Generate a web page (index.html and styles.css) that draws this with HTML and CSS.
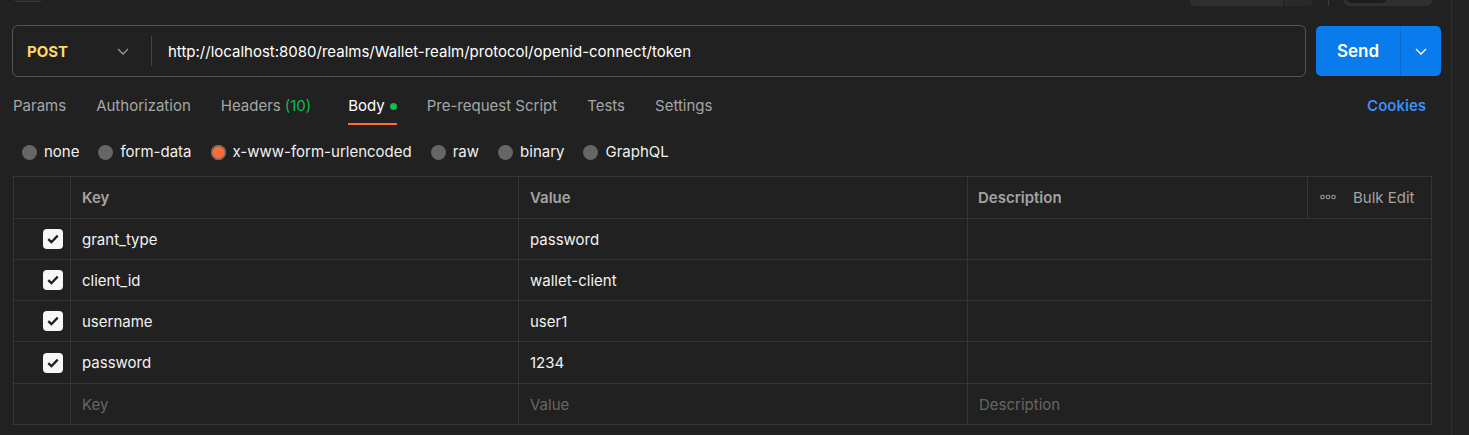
FILE: index.html
```html
<!DOCTYPE html>
<html lang="en">
<head>
<meta charset="utf-8">
<title>POST token request</title>
<link rel="stylesheet" href="styles.css">
</head>
<body>
<div class="page">
  <main class="main">
    <div class="toolbar">
      <div class="tb-left"></div>
      <div class="tb-spacer"></div>
      <div class="tb-split"><span class="tb-split-a"></span><span class="tb-split-b"></span></div>
      <div class="tb-sep"></div>
      <div class="tb-toggle"><span class="tb-pill"></span></div>
    </div>

    <div class="url-row">
      <div class="url-box">
        <div class="method">
          <span class="method-name">POST</span>
          <svg class="chev" width="12" height="7" viewBox="0 0 12 7"><path d="M1 1 L6 6 L11 1" fill="none" stroke="#9a9a9a" stroke-width="1.3"/></svg>
        </div>
        <span class="divider"></span>
        <span class="url-text">http://localhost:8080/realms/Wallet-realm/protocol/openid-connect/token</span>
      </div>
      <div class="send">
        <span class="send-main">Send</span>
        <span class="send-more"><svg width="12" height="7" viewBox="0 0 12 7"><path d="M1 1 L6 6 L11 1" fill="none" stroke="#ffffff" stroke-width="1.3"/></svg></span>
      </div>
    </div>

    <div class="tabs">
      <span class="tab">Params</span>
      <span class="tab">Authorization</span>
      <span class="tab tab-headers">Headers <span class="count">(10)</span></span>
      <span class="tab active">Body <span class="dot"></span></span>
      <span class="tab">Pre-request Script</span>
      <span class="tab">Tests</span>
      <span class="tab">Settings</span>
      <span class="tabs-fill"></span>
      <span class="cookies">Cookies</span>
    </div>

    <div class="radios">
      <span class="radio"><span class="circle"></span>none</span>
      <span class="radio"><span class="circle"></span>form-data</span>
      <span class="radio"><span class="circle on"></span>x-www-form-urlencoded</span>
      <span class="radio"><span class="circle"></span>raw</span>
      <span class="radio"><span class="circle"></span>binary</span>
      <span class="radio"><span class="circle"></span>GraphQL</span>
    </div>

    <div class="kv">
      <div class="kv-row head">
        <div class="cell"></div>
        <div class="cell">Key</div>
        <div class="cell">Value</div>
        <div class="cell desc-head">
          <span class="desc-title">Description</span>
          <span class="bulk">
            <svg width="16" height="6" viewBox="0 0 16 6"><circle cx="2.5" cy="3" r="1.8" fill="none" stroke="#9a9a9a" stroke-width="1.1"/><circle cx="8" cy="3" r="1.8" fill="none" stroke="#9a9a9a" stroke-width="1.1"/><circle cx="13.5" cy="3" r="1.8" fill="none" stroke="#9a9a9a" stroke-width="1.1"/></svg>
            <span class="bulk-text">Bulk Edit</span>
          </span>
        </div>
      </div>
      <div class="kv-row">
        <div class="cell check-cell"><span class="checkbox"><svg width="12" height="10" viewBox="0 0 12 10"><path d="M1.3 5.2 L4.4 8.2 L10.7 1.6" fill="none" stroke="#1e1e1e" stroke-width="2.3"/></svg></span></div>
        <div class="cell">grant_type</div>
        <div class="cell">password</div>
        <div class="cell"></div>
      </div>
      <div class="kv-row">
        <div class="cell check-cell"><span class="checkbox"><svg width="12" height="10" viewBox="0 0 12 10"><path d="M1.3 5.2 L4.4 8.2 L10.7 1.6" fill="none" stroke="#1e1e1e" stroke-width="2.3"/></svg></span></div>
        <div class="cell">client_id</div>
        <div class="cell">wallet-client</div>
        <div class="cell"></div>
      </div>
      <div class="kv-row">
        <div class="cell check-cell"><span class="checkbox"><svg width="12" height="10" viewBox="0 0 12 10"><path d="M1.3 5.2 L4.4 8.2 L10.7 1.6" fill="none" stroke="#1e1e1e" stroke-width="2.3"/></svg></span></div>
        <div class="cell">username</div>
        <div class="cell">user1</div>
        <div class="cell"></div>
      </div>
      <div class="kv-row tall">
        <div class="cell check-cell"><span class="checkbox"><svg width="12" height="10" viewBox="0 0 12 10"><path d="M1.3 5.2 L4.4 8.2 L10.7 1.6" fill="none" stroke="#1e1e1e" stroke-width="2.3"/></svg></span></div>
        <div class="cell">password</div>
        <div class="cell">1234</div>
        <div class="cell"></div>
      </div>
      <div class="kv-row">
        <div class="cell"></div>
        <div class="cell placeholder">Key</div>
        <div class="cell placeholder">Value</div>
        <div class="cell placeholder">Description</div>
      </div>
    </div>
  </main>
  <aside class="side"></aside>
</div>
</body>
</html>
```

FILE: styles.css
```css
* { box-sizing: border-box; }

html, body {
  margin: 0;
  padding: 0;
  background: #212121;
}

body {
  font-family: Inter, "Noto Sans", "Liberation Sans", sans-serif;
  font-size: 15px;
  color: #f0f0f0;
  overflow: hidden;
}

.page {
  display: flex;
  width: 1469px;
  height: 435px;
}

.main {
  width: 1452px;
  border-right: 1px solid #2f2f2f;
  padding: 0 19px 0 12px;
}

.side { flex: 1; }

/* cut-off toolbar at the very top */
.toolbar {
  height: 6px;
  overflow: hidden;
  display: flex;
  align-items: flex-end;
  padding-left: 1px;
}
.tb-left {
  width: 30px;
  height: 30px;
  margin-bottom: 4px;
  border: 1px solid #3a3a3a;
  border-radius: 5px;
  background: #262626;
}
.tb-spacer { flex: 1; }
.tb-split {
  display: flex;
  height: 30px;
  width: 123px;
  border-radius: 5px;
  overflow: hidden;
}
.tb-split-a { width: 93px; background: #2f2f2f; }
.tb-split-b { flex: 1; background: #2a2a2a; margin-left: 1px; }
.tb-sep {
  width: 1px;
  height: 30px;
  background: #3a3a3a;
  margin: 0 15px;
}
.tb-toggle {
  width: 88px;
  height: 30px;
  border-radius: 5px;
  background: #2f2f2f;
  padding: 0 0 3px 3px;
  display: flex;
  align-items: flex-end;
}
.tb-pill {
  width: 40px;
  height: 30px;
  border-radius: 5px;
  background: #1c1c1c;
}

/* URL row */
.url-row {
  display: flex;
  align-items: center;
  gap: 10px;
  margin-top: 19px;
  margin-right: -9px;
}
.url-box {
  flex: 1;
  height: 52px;
  border: 1px solid #555555;
  border-radius: 6px;
  display: flex;
  align-items: center;
}
.method {
  width: 138px;
  display: flex;
  align-items: center;
  justify-content: space-between;
  padding: 0 22px 0 14px;
}
.method-name {
  color: #ffd766;
  font-weight: 700;
}
.chev { display: block; }
.divider {
  width: 1px;
  height: 30px;
  background: #444444;
}
.url-text {
  padding-left: 16px;
  color: #ffffff;
}
.send {
  width: 125px;
  height: 50px;
  display: flex;
  background: #097bed;
  border-radius: 5px;
  color: #ffffff;
}
.send-main {
  width: 85px;
  display: flex;
  align-items: center;
  justify-content: center;
  font-size: 17px;
  font-weight: 600;
  border-right: 1px solid #0a6bd0;
}
.send-more {
  flex: 1;
  display: flex;
  align-items: center;
  justify-content: center;
}
.send-more svg { display: block; }

/* tabs */
.tabs {
  display: flex;
  align-items: flex-start;
  margin-top: 16px;
  padding-left: 1px;
  gap: 30px;
}
.tab {
  display: flex;
  align-items: center;
  gap: 4px;
  padding: 3px 0 7px;
  line-height: 20px;
  border-bottom: 2px solid transparent;
  color: #a6a6a6;
  white-space: nowrap;
}
.tab-headers { padding-right: 7px; }
.tab.active {
  color: #ffffff;
  border-bottom-color: #ff6c37;
}
.count { color: #0cbb52; }
.dot {
  width: 7px;
  height: 7px;
  border-radius: 50%;
  background: #0cbb52;
  margin-left: 1px;
}
.tabs-fill { flex: 1; }
.cookies {
  color: #3d8ef5;
  font-weight: 600;
  line-height: 20px;
  padding: 3px 6px 7px 0;
}

/* radios */
.radios {
  display: flex;
  align-items: center;
  gap: 19px;
  margin-top: 17px;
  padding-left: 10px;
  line-height: 20px;
}
.radio {
  display: flex;
  align-items: center;
  gap: 7px;
  color: #f0f0f0;
}
.circle {
  width: 15px;
  height: 15px;
  border-radius: 50%;
  background: #666666;
}
.circle.on {
  background: #ff6c37;
  box-shadow: inset 0 0 0 1.5px #6a6a6a;
}

/* key-value table */
.kv {
  margin-top: 14px;
  margin-left: 1px;
  width: 1419px;
  border: 1px solid #353535;
  border-bottom: none;
}
.kv-row {
  display: grid;
  grid-template-columns: 57px 448px 449px 1fr;
  height: 41px;
  border-bottom: 1px solid #353535;
}
.kv-row.head,
.kv-row.tall { height: 42px; }
.cell {
  display: flex;
  align-items: center;
  padding-left: 11px;
  border-right: 1px solid #353535;
  color: #f2f2f2;
  white-space: nowrap;
}
.cell:last-child { border-right: none; }
.head .cell {
  color: #a3a3a3;
  font-weight: 600;
}
.desc-head {
  padding-left: 10px;
  justify-content: space-between;
  align-items: stretch;
}
.desc-title {
  display: flex;
  align-items: center;
}
.bulk {
  width: 124px;
  border-left: 1px solid #353535;
  display: flex;
  align-items: center;
  padding-left: 12px;
  gap: 17px;
  font-weight: 400;
  color: #a3a3a3;
}
.bulk svg { display: block; margin-top: -2px; }
.check-cell {
  justify-content: flex-end;
  padding-right: 7px;
  padding-left: 0;
}
.checkbox {
  width: 20px;
  height: 20px;
  border-radius: 4px;
  background: #f7f7f7;
  display: flex;
  align-items: center;
  justify-content: center;
}
.checkbox svg { display: block; }
.placeholder { color: #666666; }
```
